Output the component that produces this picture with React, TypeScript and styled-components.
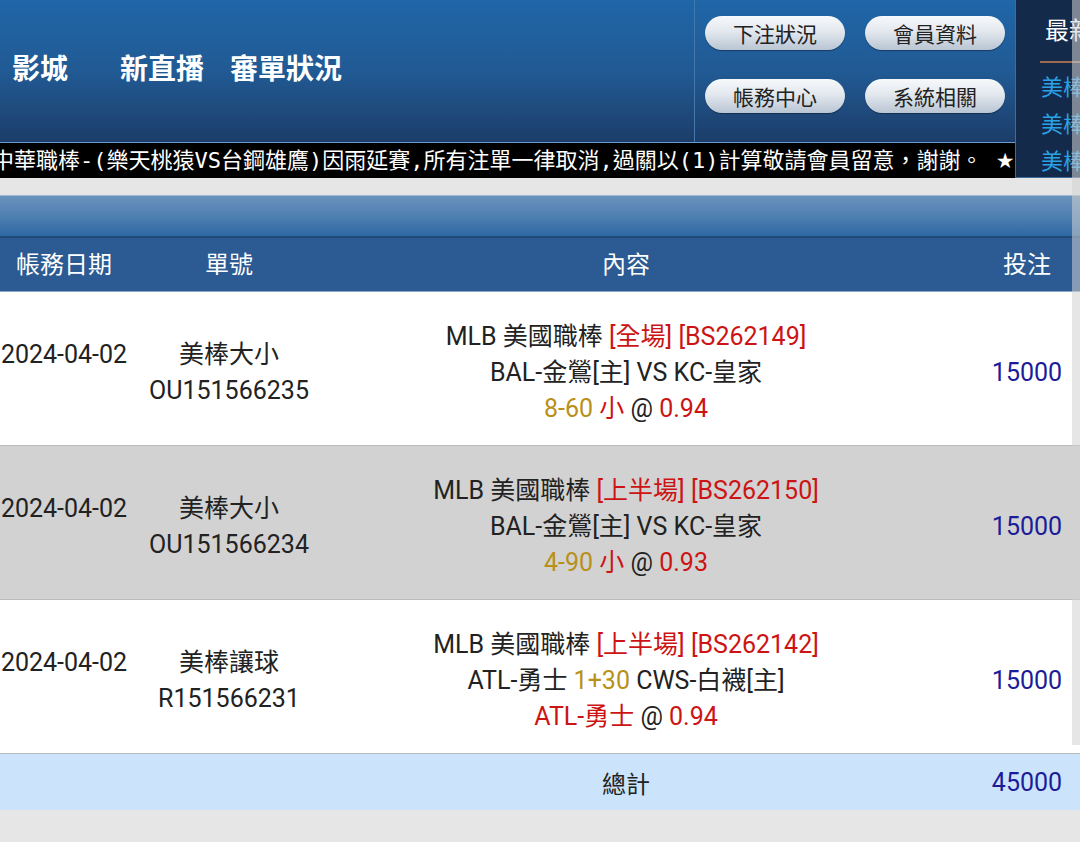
import React from "react";
import styled, { createGlobalStyle } from "styled-components";

const GlobalStyle = createGlobalStyle`
	body {
		margin: 0;
		background: #e6e6e6;
		overflow: hidden;
		font-family: Roboto, "Noto Sans CJK TC", sans-serif;
	}
`;

const Page = styled.div`
	position: relative;
	width: 1080px;
	height: 842px;
	overflow: hidden;
	background: #e6e6e6;
`;

const TopBar = styled.div`
	display: flex;
	height: 178px;
`;

const MainCol = styled.div`
	display: flex;
	flex-direction: column;
	width: 1015px;
`;

const Header = styled.div`
	display: flex;
	height: 142px;
	background: linear-gradient(180deg, #1f66a8 0%, #215a94 50%, #1c3d69 100%);
`;

const Nav = styled.div`
	display: flex;
	align-items: center;
	width: 695px;
	border-right: 1px solid #4477aa;
	padding: 0 0 8px 12px;
	box-sizing: border-box;
	font-family: "Noto Sans CJK TC", sans-serif;
	font-weight: 700;
	font-size: 28px;
	color: #fff;
`;

const NavItem = styled.span<{ $gap: number }>`
	margin-right: ${(p) => p.$gap}px;
`;

const ButtonGrid = styled.div`
	display: grid;
	grid-template-columns: 140px 140px;
	grid-auto-rows: 34px;
	align-content: start;
	column-gap: 20px;
	row-gap: 29px;
	padding: 16px 0 0 10px;
`;

const PillButton = styled.div`
	height: 34px;
	border-radius: 17px;
	background: linear-gradient(180deg, #f7f9fb 0%, #e3e8ee 45%, #b9c5d3 100%);
	box-shadow: 0 1px 1px rgba(0, 0, 0, 0.35);
	display: flex;
	align-items: center;
	justify-content: center;
	font-family: "Noto Sans CJK TC", sans-serif;
	font-size: 21px;
	color: #222;
`;

const Marquee = styled.div`
	height: 35px;
	border-top: 1px solid #6c9ccc;
	background: #000;
	color: #fff;
	font-family: "DejaVu Sans Mono", "Noto Sans CJK TC", monospace;
	font-size: 22px;
	line-height: 35px;
	white-space: pre;
	overflow: hidden;
	text-indent: -8px;
`;

const Star = styled.span`
	font-family: "DejaVu Sans", sans-serif;
	font-size: 21px;
`;

const SidePanel = styled.div`
	width: 65px;
	height: 178px;
	box-sizing: border-box;
	background: #142a4b;
	border-left: 1px solid #3e6c9e;
	border-bottom: 1px solid #3e6c9e;
	font-family: "Noto Sans CJK TC", sans-serif;
	overflow: hidden;
	white-space: nowrap;
`;

const SideTitle = styled.div`
	height: 61px;
	line-height: 58px;
	font-size: 24px;
	color: #fff;
	border-bottom: 2px solid #9c6a52;
	margin: 0 0 4px 24px;
	padding-left: 5px;
`;

const SideLink = styled.div`
	padding-left: 25px;
	font-size: 22px;
	line-height: 37px;
	color: #2ba2e4;
`;

const Gap = styled.div`
	height: 17px;
`;

const TitleBand = styled.div`
	height: 40px;
	border-top: 1px solid #9fb9d4;
	background: linear-gradient(180deg, #6a92bd 0%, #4f80b2 50%, #2e68a3 100%);
	border-bottom: 2px solid #1f4a77;
`;

const Grid = styled.div<{ $bg: string; $h: number }>`
	display: grid;
	grid-template-columns: 128px 202px 592px 210px;
	width: 1132px;
	height: ${(p) => p.$h}px;
	background: ${(p) => p.$bg};
	align-items: center;
	text-align: center;
	box-sizing: border-box;
`;

const HeadRow = styled(Grid)`
	color: #fff;
	font-family: "Noto Sans CJK TC", sans-serif;
	font-size: 24px;
	border-bottom: 1px solid #8aa6c6;
	padding-bottom: 5px;
`;

const BodyRow = styled(Grid)`
	font-size: 25px;
	line-height: 36px;
	color: #222;
	border-bottom: 1px solid #bbbbbb;
	padding-top: 8px;
`;

const Cell = styled.div`
	display: flex;
	flex-direction: column;
	align-items: center;
`;

const Amount = styled.div`
	color: #1c1c99;
	font-size: 25px;
`;

const Red = styled.span`
	color: #cc1414;
`;

const Gold = styled.span`
	color: #b8901a;
`;

const TotalRow = styled(Grid)`
	font-size: 24px;
	color: #222;
`;

const ScrollTrack = styled.div`
	position: absolute;
	top: 0;
	right: 0;
	width: 8px;
	height: 745px;
	background: rgba(210, 210, 210, 0.55);
`;

type Bet = {
	date: string;
	kind: string;
	no: string;
	stage: string;
	code: string;
	match: React.ReactNode;
	pick: React.ReactNode;
	amount: string;
	bg: string;
};

const bets: Bet[] = [
	{
		date: "2024-04-02",
		kind: "美棒大小",
		no: "OU151566235",
		stage: "[全場]",
		code: "[BS262149]",
		match: <>BAL-金鶯[主] VS KC-皇家</>,
		pick: (
			<>
				<Gold>8-60</Gold> <Red>小</Red> @ <Red>0.94</Red>
			</>
		),
		amount: "15000",
		bg: "#ffffff",
	},
	{
		date: "2024-04-02",
		kind: "美棒大小",
		no: "OU151566234",
		stage: "[上半場]",
		code: "[BS262150]",
		match: <>BAL-金鶯[主] VS KC-皇家</>,
		pick: (
			<>
				<Gold>4-90</Gold> <Red>小</Red> @ <Red>0.93</Red>
			</>
		),
		amount: "15000",
		bg: "#d2d2d2",
	},
	{
		date: "2024-04-02",
		kind: "美棒讓球",
		no: "R151566231",
		stage: "[上半場]",
		code: "[BS262142]",
		match: (
			<>
				ATL-勇士 <Gold>1+30</Gold> CWS-白襪[主]
			</>
		),
		pick: (
			<>
				<Red>ATL-勇士</Red> @ <Red>0.94</Red>
			</>
		),
		amount: "15000",
		bg: "#ffffff",
	},
];

export default function App() {
	return (
		<Page>
			<GlobalStyle />
			<TopBar>
				<MainCol>
					<Header>
						<Nav>
							<NavItem $gap={52}>影城</NavItem>
							<NavItem $gap={26}>新直播</NavItem>
							<NavItem $gap={0}>審單狀況</NavItem>
						</Nav>
						<ButtonGrid>
							<PillButton>下注狀況</PillButton>
							<PillButton>會員資料</PillButton>
							<PillButton>帳務中心</PillButton>
							<PillButton>系統相關</PillButton>
						</ButtonGrid>
					</Header>
					<Marquee>
						{"中華職棒-(樂天桃猿VS台鋼雄鷹)因雨延賽,所有注單一律取消,過關以(1)計算敬請會員留意，謝謝。 "}
						<Star>★</Star>
					</Marquee>
				</MainCol>
				<SidePanel>
					<SideTitle>最新</SideTitle>
					<SideLink>美棒</SideLink>
					<SideLink>美棒</SideLink>
					<SideLink>美棒</SideLink>
				</SidePanel>
			</TopBar>
			<Gap />
			<TitleBand />
			<HeadRow $bg="#2c5a92" $h={54}>
				<div>帳務日期</div>
				<div>單號</div>
				<div>內容</div>
				<div>投注</div>
			</HeadRow>
			{bets.map((b, i) => (
				<BodyRow key={i} $bg={b.bg} $h={154}>
					<Cell>
						<div>{b.date}</div>
						<div>&nbsp;</div>
					</Cell>
					<Cell>
						<div>{b.kind}</div>
						<div>{b.no}</div>
					</Cell>
					<Cell>
						<div>
							MLB 美國職棒 <Red>{b.stage}</Red> <Red>{b.code}</Red>
						</div>
						<div>{b.match}</div>
						<div>{b.pick}</div>
					</Cell>
					<Amount>{b.amount}</Amount>
				</BodyRow>
			))}
			<TotalRow $bg="#cce4fb" $h={56}>
				<div />
				<div />
				<div>總計</div>
				<Amount>45000</Amount>
			</TotalRow>
			<ScrollTrack />
		</Page>
	);
}
